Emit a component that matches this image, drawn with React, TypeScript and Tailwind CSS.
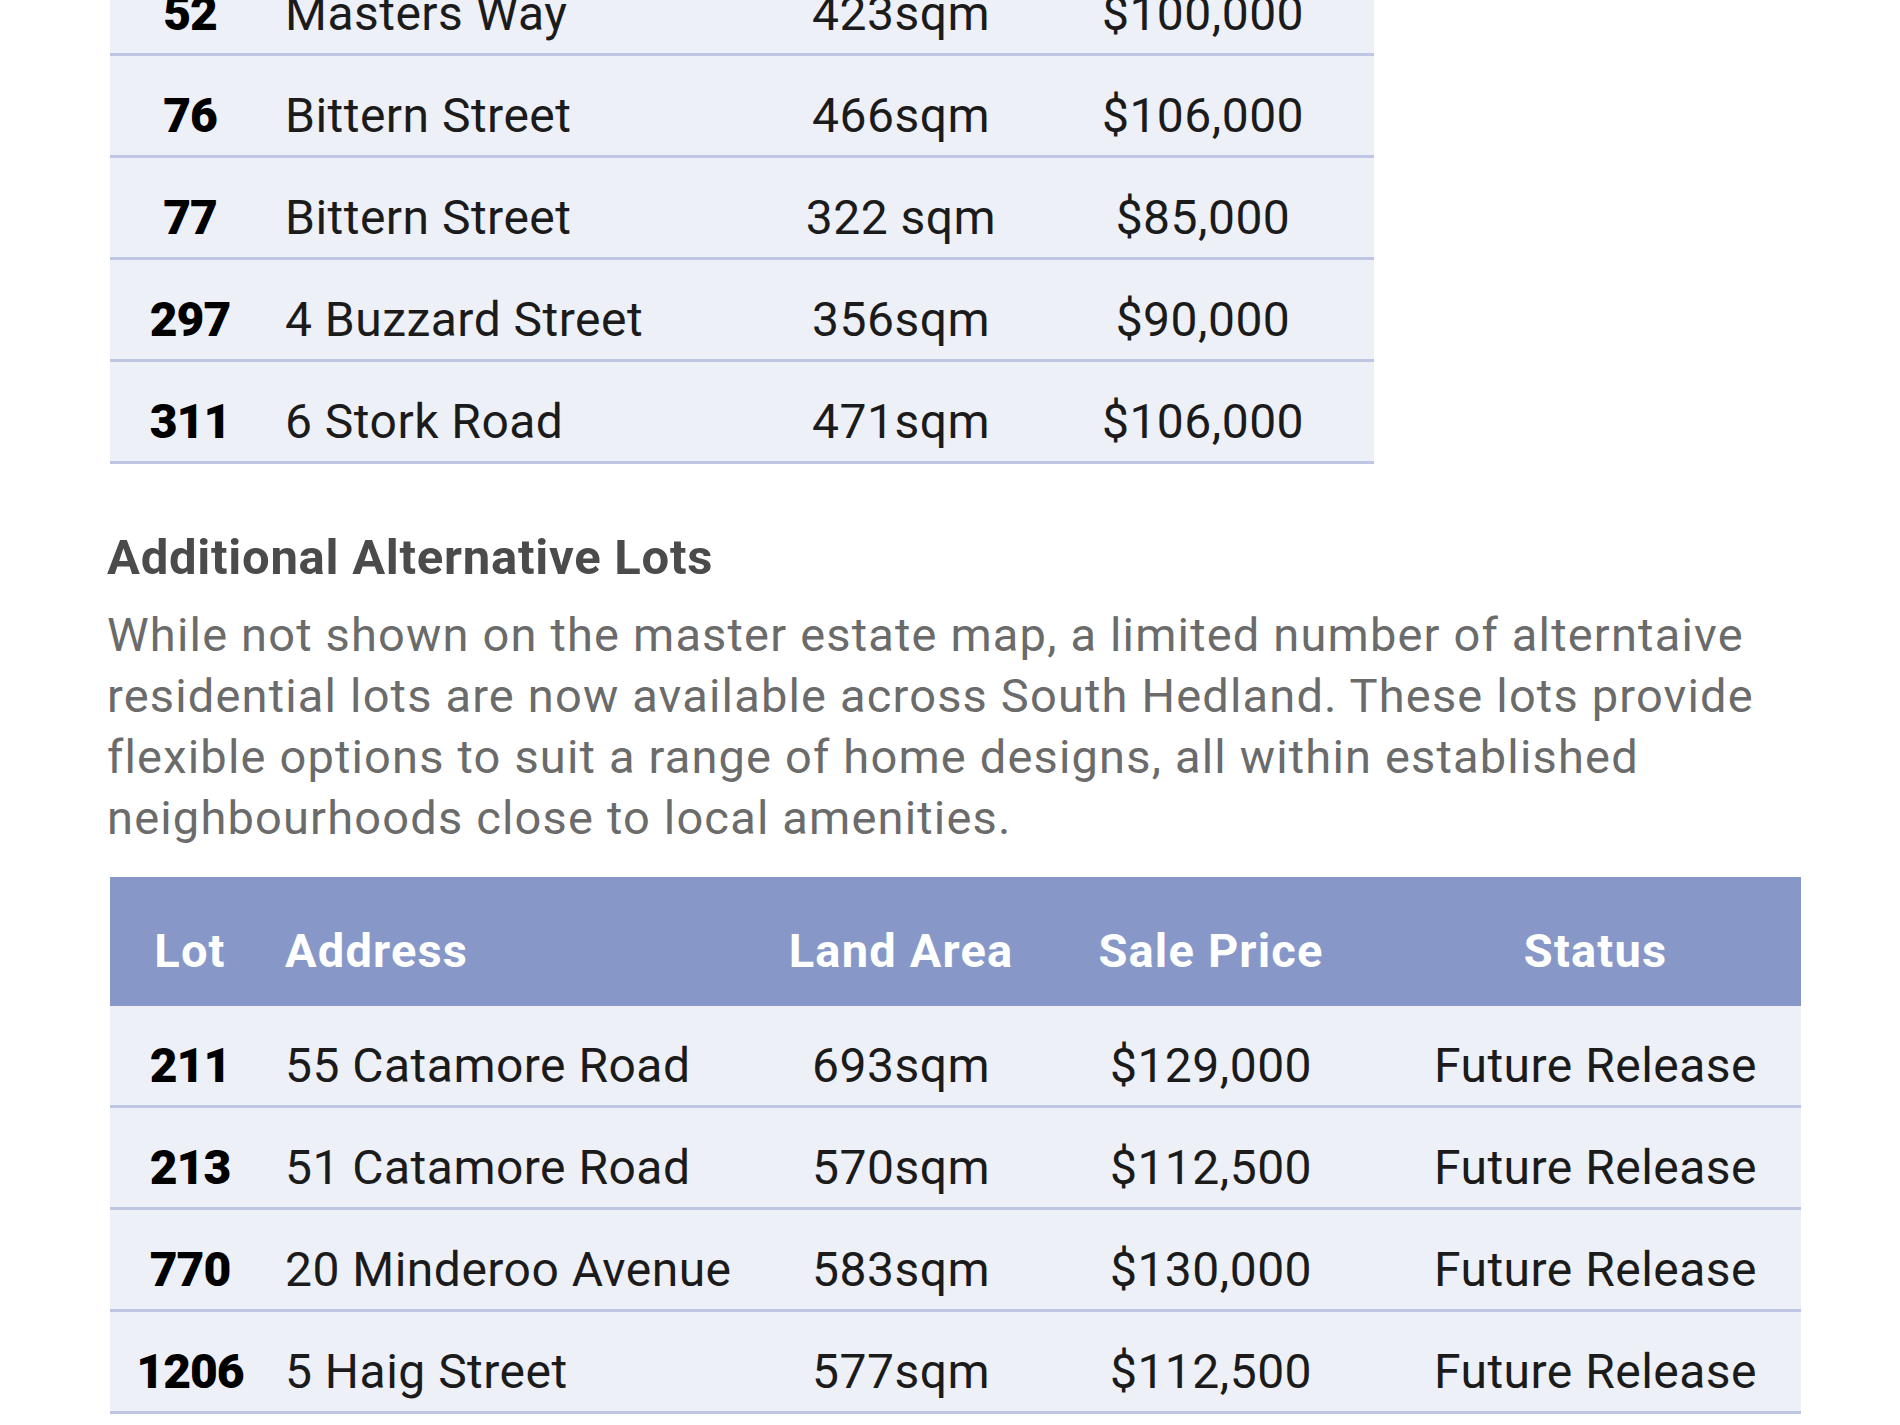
const topRows = [
  { lot: '52', address: 'Masters Way', area: '423sqm', price: '$100,000' },
  { lot: '76', address: 'Bittern Street', area: '466sqm', price: '$106,000' },
  { lot: '77', address: 'Bittern Street', area: '322 sqm', price: '$85,000' },
  { lot: '297', address: '4 Buzzard Street', area: '356sqm', price: '$90,000' },
  { lot: '311', address: '6 Stork Road', area: '471sqm', price: '$106,000' },
];

const altRows = [
  { lot: '211', address: '55 Catamore Road', area: '693sqm', price: '$129,000', status: 'Future Release' },
  { lot: '213', address: '51 Catamore Road', area: '570sqm', price: '$112,500', status: 'Future Release' },
  { lot: '770', address: '20 Minderoo Avenue', area: '583sqm', price: '$130,000', status: 'Future Release' },
  { lot: '1206', address: '5 Haig Street', area: '577sqm', price: '$112,500', status: 'Future Release' },
];

export default function App() {
  return (
    <div
      className="min-h-[1425px] w-[1900px] overflow-hidden bg-white"
      style={{ fontFamily: 'Roboto, "Liberation Sans", sans-serif' }}
    >
      <div className="pl-[110px]">
        {/* available lots table, scrolled so only its tail shows */}
        <div className="-mt-[46px] w-[1264px]">
          {topRows.map((row) => (
            <div
              key={row.lot}
              className="grid h-[102px] grid-cols-[160px_500px_262px_342px] items-center border-b-[3px] border-[#bfc6e4] bg-[#eef0f7] pt-[20px] text-[48px] tracking-[0.01em] text-[#1b1b1b]"
            >
              <span className="text-center font-black tracking-[-0.02em] text-black">{row.lot}</span>
              <span className="pl-[15px] whitespace-nowrap">{row.address}</span>
              <span className="text-center whitespace-nowrap">{row.area}</span>
              <span className="text-center whitespace-nowrap">{row.price}</span>
            </div>
          ))}
        </div>

        <h3 className="mt-[64px] -ml-[3px] h-[60px] text-[49px] leading-[60px] font-bold tracking-[0.015em] text-[#4b4b4b]">
          Additional Alternative Lots
        </h3>
        <p className="mt-[16px] -ml-[3px] text-[47px] leading-[61px] tracking-[0.025em] whitespace-nowrap text-[#6b6b6b]">
          While not shown on the master estate map, a limited number of alterntaive
          <br />
          residential lots are now available across South Hedland. These lots provide
          <br />
          flexible options to suit a range of home designs, all within established
          <br />
          neighbourhoods close to local amenities.
        </p>

        <div className="mt-[29px] w-[1691px]">
          <div className="grid h-[129px] grid-cols-[160px_500px_262px_358px_411px] items-center bg-[#8798c8] pt-[20px] text-[47px] font-bold tracking-[0.025em] text-white">
            <span className="text-center">Lot</span>
            <span className="pl-[15px]">Address</span>
            <span className="text-center">Land Area</span>
            <span className="text-center">Sale Price</span>
            <span className="text-center">Status</span>
          </div>
          {altRows.map((row) => (
            <div
              key={row.lot}
              className="grid h-[102px] grid-cols-[160px_500px_262px_358px_411px] items-center border-b-[3px] border-[#bfc6e4] bg-[#eef0f7] pt-[20px] text-[48px] tracking-[0.01em] text-[#1b1b1b]"
            >
              <span className="text-center font-black tracking-[-0.02em] text-black">{row.lot}</span>
              <span className="pl-[15px] whitespace-nowrap">{row.address}</span>
              <span className="text-center whitespace-nowrap">{row.area}</span>
              <span className="text-center whitespace-nowrap">{row.price}</span>
              <span className="text-center whitespace-nowrap">{row.status}</span>
            </div>
          ))}
        </div>
      </div>
    </div>
  );
}
